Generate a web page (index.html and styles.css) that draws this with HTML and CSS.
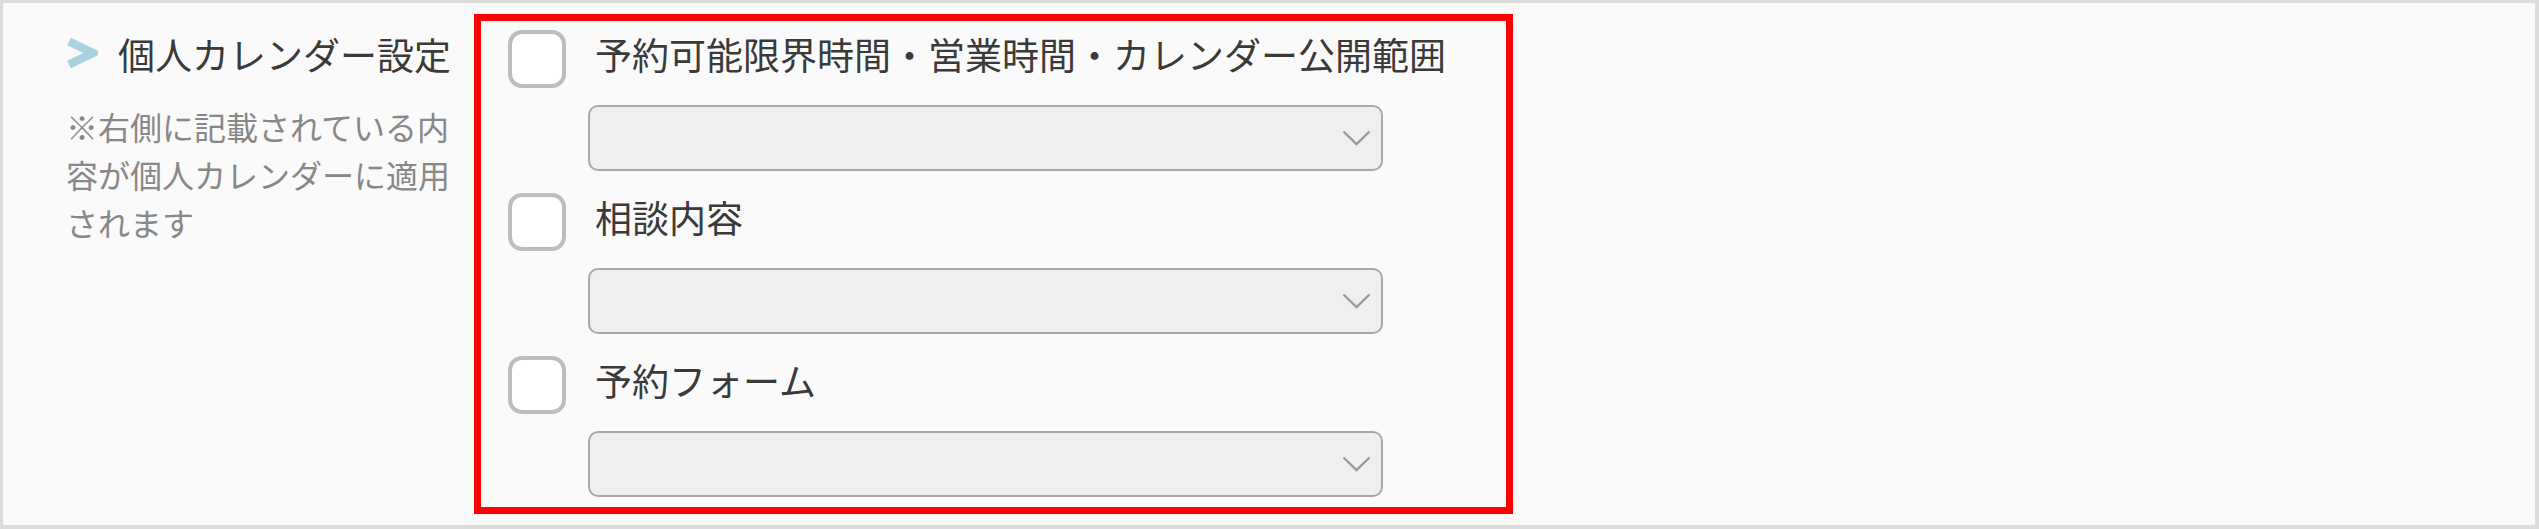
FILE: index.html
```html
<!DOCTYPE html>
<html lang="ja">
<head>
<meta charset="utf-8">
<title>個人カレンダー設定</title>
<link rel="stylesheet" href="styles.css">
</head>
<body>
<div class="panel">
  <div class="side">
    <div class="side-title">
      <svg class="side-arrow" width="32" height="30" viewBox="0 0 32 30" aria-hidden="true">
        <polyline points="3,3.5 27,15 3,26.5" fill="none" stroke="#a9d3e1" stroke-width="8.5" stroke-linejoin="miter" stroke-linecap="butt"/>
      </svg>
      <span>個人カレンダー設定</span>
    </div>
    <p class="side-note">※右側に記載されている内容が個人カレンダーに適用されます</p>
  </div>
  <div class="highlight">
    <div class="opt">
      <label class="opt-head"><span class="check"></span><span class="opt-label">予約可能限界時間・営業時間・カレンダー公開範囲</span></label>
      <div class="select"><svg class="chev" width="29" height="16" viewBox="0 0 29 16" aria-hidden="true"><polyline points="1.5,1.5 14.5,14 27.5,1.5" fill="none" stroke="#9a9a9a" stroke-width="2.4"/></svg></div>
    </div>
    <div class="opt">
      <label class="opt-head"><span class="check"></span><span class="opt-label">相談内容</span></label>
      <div class="select"><svg class="chev" width="29" height="16" viewBox="0 0 29 16" aria-hidden="true"><polyline points="1.5,1.5 14.5,14 27.5,1.5" fill="none" stroke="#9a9a9a" stroke-width="2.4"/></svg></div>
    </div>
    <div class="opt">
      <label class="opt-head"><span class="check"></span><span class="opt-label">予約フォーム</span></label>
      <div class="select"><svg class="chev" width="29" height="16" viewBox="0 0 29 16" aria-hidden="true"><polyline points="1.5,1.5 14.5,14 27.5,1.5" fill="none" stroke="#9a9a9a" stroke-width="2.4"/></svg></div>
    </div>
  </div>
</div>
</body>
</html>
```
FILE: styles.css
```css
html, body {
  margin: 0;
  padding: 0;
  background: #fafafa;
}

body {
  font-family: "Noto Sans CJK JP", "Noto Sans", sans-serif;
}

.panel {
  box-sizing: border-box;
  width: 2539px;
  height: 529px;
  border: 3px solid #dcdcdc;
  border-right-width: 4px;
  border-bottom-width: 4px;
  background: #fafafa;
  display: flex;
  align-items: flex-start;
  padding: 11px 0 0 63px;
}

.side {
  width: 408px;
  flex: none;
  padding-top: 16px;
}

.side-title {
  display: flex;
  align-items: center;
  height: 48px;
  font-size: 37px;
  line-height: 48px;
  color: #3a3a3a;
}

.side-arrow {
  display: block;
  flex: none;
  margin-right: 20px;
  margin-top: -2px;
}

.side-note {
  margin: 24px 0 0;
  width: 400px;
  font-size: 32px;
  line-height: 48px;
  color: #888;
}

.highlight {
  box-sizing: border-box;
  width: 1039px;
  height: 500px;
  flex: none;
  border: 7px solid #ff0000;
  padding: 9px 0 9px 27px;
  display: flex;
  flex-direction: column;
  gap: 22px;
}

.opt-head {
  display: flex;
  align-items: flex-start;
  height: 58px;
}

.check {
  box-sizing: border-box;
  width: 58px;
  height: 58px;
  flex: none;
  border: 4px solid #bdbdbd;
  border-radius: 14px;
  background: #fff;
}

.opt-label {
  margin-left: 29px;
  font-size: 37px;
  line-height: 48px;
  color: #3a3a3a;
  white-space: nowrap;
}

.select {
  box-sizing: border-box;
  width: 795px;
  height: 66px;
  margin: 17px 0 0 80px;
  border: 2px solid #a9a9a9;
  border-radius: 10px;
  background: #efefef;
  display: flex;
  align-items: center;
  justify-content: flex-end;
  padding-right: 10px;
}

.chev {
  display: block;
}
```
